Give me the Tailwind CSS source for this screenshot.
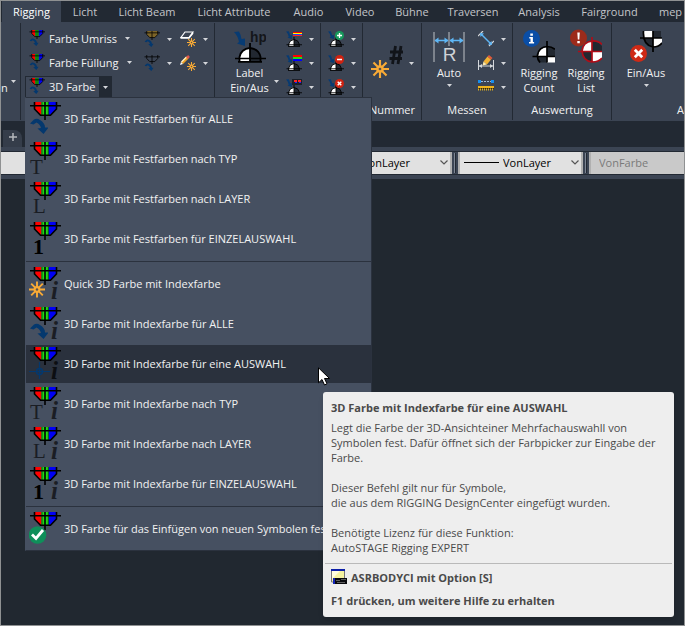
<!DOCTYPE html>
<html lang="de">
<head>
<meta charset="utf-8">
<title>Rigging</title>
<script src="https://cdn.jsdelivr.net/npm/@tailwindcss/browser@4"></script>
</head>
<body class="bg-[#212830] font-['Open_Sans','Noto_Sans',sans-serif] text-[11px] leading-[15px] text-[#f2f2f2]">
<svg class="absolute size-0" aria-hidden="true">
  <defs>
    <clipPath id="lampClip"><path d="M5.500 0h22v7l-6 6h-10l-6-6z"/></clipPath>
    <symbol id="caret" viewBox="0 0 5 3"><path d="M0 0h5L2.500 3z" fill="#d4d6da"/></symbol>
    <symbol id="lampOutline" viewBox="0 0 32 18"><path d="M5.500 0v7l6 6.200h10l6-6.200V0" fill="none" stroke="#000" stroke-width="1.600"/><path d="M1 3.700h31M16 0v18" stroke="#000" stroke-width="1.600"/></symbol>
    <symbol id="lamp" viewBox="0 0 32 18">
      <g clip-path="url(#lampClip)"><path d="M5 0h7.500v14H5z" fill="#f00"/><path d="M12.500 0h7v14h-7z" fill="#1fdc14"/><path d="M19.500 0H28v14h-8.500z" fill="#0000f5"/><path d="M13 0v14M19.300 0v14" stroke="#0b5a10" stroke-width="1"/></g>
      <use href="#lampOutline" width="32" height="18"/>
    </symbol>
    <symbol id="curve" viewBox="0 0 18 16"><path d="M0 5.500L4 1.500Q7 0 10 2Q15 5 15 9.500H18.500L13.500 16L7.500 10.500L11 10Q10 6 6.500 4.500L3.500 6.500z" fill="#04386e"/></symbol>
    <symbol id="sun" viewBox="0 0 16 16"><path d="M8 0v16M0 8h16M2.200 2.200l11.600 11.600M13.800 2.200L2.200 13.800" stroke="#f9ab36" stroke-width="1.900"/><circle cx="8" cy="8" r="3.400" fill="#f9ab36"/><circle cx="8" cy="8" r="1.200" fill="#59524c"/></symbol>
    <symbol id="lampCurve" viewBox="0 0 32 32"><use href="#lamp" width="32" height="18"/><use href="#curve" x="1" y="16" width="18" height="16"/></symbol>
    <symbol id="dart" viewBox="0 0 11 15"><path d="M0 1L5 .5Q7 4 7.500 8L11 7.500V15L3 12.500L5 11Q4 5 0 1z" fill="#073b73"/></symbol>
    <symbol id="dome" viewBox="0 0 32 20"><path d="M6 18V14Q7 6 16 5v13z" fill="#fff"/><path d="M16 5Q25 6 26 14v4H16z" fill="#222831"/><path d="M5.500 18V14Q7 6 16 5Q25 6 26.500 14V18M16 0v18" fill="none" stroke="#000" stroke-width="1.800"/><path d="M1 15.500h31M4 18.900h24" stroke="#000" stroke-width="1.700"/></symbol>
    <symbol id="chev" viewBox="0 0 8 5"><path d="M.5.500L4 4L7.500.500" fill="none" stroke="#555" stroke-width="1.200"/></symbol>
  </defs>
</svg>

<main class="relative min-h-screen overflow-hidden border border-[#8f9192]">
  <nav class="flex h-[21px] bg-[#222933] pl-px text-[#c3c5c9]" aria-label="Register">
    <button class="w-[59px] shrink-0 bg-[#3b4453] text-white">Rigging</button>
    <button class="w-12 shrink-0">Licht</button>
    <button class="w-[76px] shrink-0 whitespace-nowrap">Licht Beam</button>
    <button class="w-[98px] shrink-0 whitespace-nowrap">Licht Attribute</button>
    <button class="w-[51px] shrink-0">Audio</button>
    <button class="w-[52px] shrink-0">Video</button>
    <button class="w-[52px] shrink-0">Bühne</button>
    <button class="w-[70px] shrink-0">Traversen</button>
    <button class="w-[62px] shrink-0">Analysis</button>
    <button class="w-[79px] shrink-0">Fairground</button>
    <button class="shrink-0 pl-2.5">mep</button>
  </nav>

  <section class="flex h-[99px] overflow-hidden bg-[#3b4453] py-px" aria-label="Multifunktionsleiste">
    <div class="flex w-5 shrink-0 items-center border-r border-[#222933] pt-7">
      <button class="flex items-start gap-[3px]" aria-label="Weitere"><span class="pt-1">n</span><svg class="mt-1 h-[3px] w-[5px]"><use href="#caret"/></svg></button>
    </div>

    <div class="flex w-[194px] shrink-0 border-r border-[#222933] pt-1 pl-1">
      <div class="flex w-[119px] flex-col">
        <button class="flex h-6 items-center gap-1 pb-0.5 pl-1"><svg class="size-4"><use href="#lampCurve"/></svg>Farbe Umriss<svg class="ml-1 h-[3px] w-[5px]"><use href="#caret"/></svg></button>
        <button class="flex h-6 items-center gap-1 pb-0.5 pl-1"><svg class="size-4"><use href="#lampCurve"/></svg>Farbe Füllung<svg class="ml-1 h-[3px] w-[5px]"><use href="#caret"/></svg></button>
        <div class="mt-px flex h-[22px] w-[87px] border border-[#222933]">
          <button class="flex flex-1 items-center gap-1 bg-[#3f4858] pb-0.5 pl-[3px] whitespace-nowrap"><svg class="size-4"><use href="#lampCurve"/></svg>3D Farbe</button>
          <button class="flex w-3 items-center justify-center bg-[#222933]" aria-label="3D Farbe Optionen"><svg class="h-[3px] w-[5px]"><use href="#caret"/></svg></button>
        </div>
      </div>
      <div class="flex flex-col">
        <button class="flex h-6 items-center gap-[7px]" aria-label="Farbe ändern"><svg class="size-4" viewBox="0 0 32 32"><path d="M5.500 0h22v7l-6 6h-10l-6-6z" fill="#7d6529"/><use href="#lampOutline" width="32" height="18"/><use href="#curve" x="1" y="16" width="18" height="16"/></svg><svg class="h-[3px] w-[5px]"><use href="#caret"/></svg></button>
        <button class="flex h-6 items-center gap-[7px]" aria-label="Füllung ändern"><svg class="size-4" viewBox="0 0 32 32"><use href="#lampOutline" width="32" height="18"/><use href="#curve" x="1" y="16" width="18" height="16"/></svg><svg class="h-[3px] w-[5px]"><use href="#caret"/></svg></button>
      </div>
      <div class="ml-2 flex flex-col">
        <button class="flex h-6 items-center gap-[7px]" aria-label="Radieren"><svg class="size-4" viewBox="0 0 16 16"><path d="M5 1h8L9 6.500H1z" fill="#3b4453" stroke="#fff" stroke-width="1.200"/><path d="M.5 7h8.500L13 2" fill="none" stroke="#fff" stroke-width="1.500"/><use href="#sun" x="7" y="7" width="9" height="9"/></svg><svg class="h-[3px] w-[5px]"><use href="#caret"/></svg></button>
        <button class="flex h-6 items-center gap-[7px]" aria-label="Stift"><svg class="size-4" viewBox="0 0 16 16"><path d="M2 8L7.500 2.500" stroke="#f0a428" stroke-width="3"/><path d="M1.500 7L6.500 2" stroke="#fff3c8" stroke-width="1.200"/><path d="M7 3L9 1" stroke="#e2574c" stroke-width="2.500"/><path d="M0 10L1 7l2 2z" fill="#fff"/><use href="#sun" x="7" y="7" width="9" height="9"/></svg><svg class="h-[3px] w-[5px]"><use href="#caret"/></svg></button>
      </div>
    </div>

    <div class="flex w-[106px] shrink-0 border-r border-[#222933] pt-1 pl-2.5">
      <button class="flex w-[49px] flex-col items-center pt-1">
        <svg class="size-8" viewBox="0 0 32 32"><use href="#dart" x="0" y="0" width="11" height="15"/><text x="16" y="11" font-family="Liberation Mono" font-weight="bold" font-size="14" fill="#14161a">hp</text><use href="#dome" x="0" y="12" width="32" height="20"/></svg>
        <span class="mt-0.5 block">Label<br>Ein/Aus</span>
      </button>
      <svg class="mt-[53px] h-[3px] w-[5px]"><use href="#caret"/></svg>
      <div class="ml-[7px] flex flex-col">
        <button class="flex h-6 items-center gap-[7px]" aria-label="Label Farbe 1"><svg class="size-4" viewBox="0 0 16 16"><use href="#dart" width="6" height="8"/><path d="M7 1h9v1H7z" fill="#f00"/><path d="M7 2h9v1H7z" fill="#ff0"/><path d="M7 3h9v1H7z" fill="#14f"/><path d="M7 4h9v1H7z" fill="#f22"/><use href="#dome" y="6" width="16" height="10"/></svg><svg class="h-[3px] w-[5px]"><use href="#caret"/></svg></button>
        <button class="flex h-6 items-center gap-[7px]" aria-label="Label Farbe 2"><svg class="size-4" viewBox="0 0 16 16"><use href="#dart" width="6" height="8"/><path d="M7 0h9v2H7z" fill="#f00"/><path d="M7 2h9v2H7z" fill="#1fe014"/><path d="M7 4h9v2H7z" fill="#00f"/><use href="#dome" y="6" width="16" height="10"/></svg><svg class="h-[3px] w-[5px]"><use href="#caret"/></svg></button>
        <button class="flex h-6 items-center gap-[7px]" aria-label="Label Farbe 3"><svg class="size-4" viewBox="0 0 16 16"><use href="#dart" width="6" height="8"/><path d="M6 0h10v6H6z" fill="#1c2029"/><path d="M8 1h3v2H8zM12 1h3v2h-3z" fill="#f22"/><path d="M9 3h2v1H9zM13 3h2v1h-2z" fill="#22f"/><use href="#dome" y="6" width="16" height="10"/></svg><svg class="h-[3px] w-[5px]"><use href="#caret"/></svg></button>
      </div>
    </div>

    <div class="flex w-[42px] shrink-0 flex-col border-r border-[#222933] pt-1 pl-[7px]">
      <button class="flex h-6 items-center gap-[7px]" aria-label="Hinzufügen"><svg class="size-4" viewBox="0 0 16 16"><use href="#dart" width="6" height="8"/><use href="#dome" y="6" width="16" height="10"/><circle cx="11.500" cy="4.500" r="4.500" fill="#169a5c"/><path d="M11.500 2v5M9 4.500h5" stroke="#fff" stroke-width="1.300"/></svg><svg class="h-[3px] w-[5px]"><use href="#caret"/></svg></button>
      <button class="flex h-6 items-center gap-[7px]" aria-label="Entfernen"><svg class="size-4" viewBox="0 0 16 16"><use href="#dart" width="6" height="8"/><use href="#dome" y="6" width="16" height="10"/><circle cx="11.500" cy="4.500" r="4.500" fill="#cf2211"/><path d="M9 4.500h5" stroke="#fff" stroke-width="1.500"/></svg><svg class="h-[3px] w-[5px]"><use href="#caret"/></svg></button>
      <button class="flex h-6 items-center gap-[7px]" aria-label="Löschen"><svg class="size-4" viewBox="0 0 16 16"><use href="#dart" width="6" height="8"/><use href="#dome" y="6" width="16" height="10"/><circle cx="11.500" cy="4.500" r="4.500" fill="#cf2211"/><path d="M9.700 2.700l3.600 3.600M13.300 2.700L9.700 6.300" stroke="#fff" stroke-width="1.400"/></svg><svg class="h-[3px] w-[5px]"><use href="#caret"/></svg></button>
    </div>

    <div class="flex w-[59px] shrink-0 flex-col items-center border-r border-[#222933] pt-1">
      <button class="flex h-[72px] items-center gap-1.5" aria-label="Neue Nummer"><svg class="h-9 w-8" viewBox="0 0 32 36"><use href="#sun" x="0" y="15" width="18" height="18"/><path d="M24.500 1L21.500 19M30 1L27 19M19 7h13M18.500 13.500H31" stroke="#111419" stroke-width="2.800"/></svg><svg class="h-[3px] w-[5px]"><use href="#caret"/></svg></button>
      <div class="flex h-5 items-center">Nummer</div>
    </div>

    <div class="flex w-[91px] shrink-0 flex-col items-center border-r border-[#222933] pt-1">
      <div class="flex h-[72px] gap-[11px] self-start pl-[9px]">
        <button class="flex w-9 flex-col items-center pt-1">
          <svg class="size-8" viewBox="0 0 32 32"><path d="M1 1v30M16 1v14M31 1v30" stroke="#bfc2c7" stroke-width="1"/><path d="M2 9.500h13M17 9.500h13" stroke="#5eb6f5" stroke-width="1.300"/><path d="M1.500 9.500l4-3v6zM15.500 9.500l-4-3v6zM16.500 9.500l4-3v6zM30.500 9.500l-4-3v6z" fill="#5eb6f5"/><text x="16.500" y="30" text-anchor="middle" font-family="Liberation Sans" font-size="19" fill="#cfd2d6">R</text></svg>
          <span class="mt-0.5">Auto</span><svg class="mt-1 h-[3px] w-[5px]"><use href="#caret"/></svg>
        </button>
        <div class="flex flex-col">
          <button class="flex h-6 items-center gap-[7px]" aria-label="Abstand messen"><svg class="size-4" viewBox="0 0 16 16"><path d="M0 5L5 0M11 15l5-5" stroke="#d5d8dc" stroke-width="1.200"/><path d="M3 3l10 10" stroke="#5eb6f5" stroke-width="1.400"/><path d="M2 2l4 .5L2.500 6zM14 14l-4-.5 3.500-3.500z" fill="#5eb6f5"/></svg><svg class="h-[3px] w-[5px]"><use href="#caret"/></svg></button>
          <button class="flex h-6 items-center gap-[7px]" aria-label="Maß bearbeiten"><svg class="size-4" viewBox="0 0 16 16"><path d="M.5 5v10M15.500 5v10M1 11h14" stroke="#d5d8dc"/><path d="M1 11l3-2v4zM15 11l-3-2v4z" fill="#d5d8dc"/><path d="M5.500 6.500L9.500 1.500L13 4.500L9 9.500z" fill="#f3b233"/><path d="M9.500 1.500L11 0L14.500 3L13 4.500z" fill="#e25a3c"/><path d="M4.500 10.500l1-4L9 9.500z" fill="#ffe9a8"/></svg><svg class="h-[3px] w-[5px]"><use href="#caret"/></svg></button>
          <button class="flex h-6 items-center gap-[7px]" aria-label="Lineal"><svg class="size-4" viewBox="0 0 16 16"><path d="M3 2.500h10" stroke="#9bb8d8" stroke-dasharray="2 1"/><path d="M0 1h3v3H0zM13 1h3v3h-3z" fill="#168ef0"/><path d="M0 7h16v3H0z" fill="#f0b51c"/><path d="M0 9.500h16" stroke="#3a2c08" stroke-width="1"/><path d="M0 10.500h16" stroke="#e2b021" stroke-width="2" stroke-dasharray="1 1"/></svg><svg class="h-[3px] w-[5px]"><use href="#caret"/></svg></button>
        </div>
      </div>
      <div class="flex h-5 items-center">Messen</div>
    </div>

    <div class="flex w-[99px] shrink-0 flex-col items-center border-r border-[#222933] pt-1">
      <div class="flex h-[72px] text-center">
        <button class="flex w-12 flex-col items-center pt-0.5">
          <svg class="h-[34px] w-8" viewBox="0 0 32 34"><circle cx="8.500" cy="9.500" r="8.500" fill="#0a4ea6"/><path d="M7.300 4.500h2.600v2.300H7.300zM6.300 8h3.600v5h1.200v1.500H6V13h1.500V9.500H6.300z" fill="#fff"/><path d="M15 27Q15.500 18.500 24 18V27z" fill="#fff"/><path d="M24 18q5 0 8 3.500V27h-8z" fill="#222831"/><path d="M15 28h9v5.500h-7z" fill="#222831"/><path d="M24 28h8v5.500h-8z" fill="#fff"/><path d="M17 33.500Q14 30 14.500 26Q16 18 24 17.500Q29 17.500 32 20.500M24 12v21.500M9.500 27.500H32" fill="none" stroke="#000" stroke-width="1.700"/></svg>
          <span class="mt-0.5">Rigging<br>Count</span>
        </button>
        <button class="flex w-[46px] flex-col items-center pt-0.5">
          <svg class="h-[34px] w-8" viewBox="0 0 32 34"><path d="M12 22Q13 13 22 12V22z" fill="#fff"/><path d="M22 12q6 0 10 5v5H22z" fill="#222831"/><path d="M12 22h10v11q-9-1-10-11z" fill="#222831"/><path d="M22 22h10v7q-4 4-10 4z" fill="#fff"/><path d="M32 15.500Q28 11.500 22 12Q13 13 12 22Q13 32 22 33Q29 33 32 29M22 8v25.500M8 22.500h24" fill="none" stroke="#b00d18" stroke-width="1.700"/><circle cx="8.500" cy="9" r="8.500" fill="#9c2b1b"/><path d="M7.300 3.500h2.500l-.5 7H7.800zM7.300 12h2.500v2.200H7.300z" fill="#fff"/></svg>
          <span class="mt-0.5">Rigging<br>List</span>
        </button>
      </div>
      <div class="flex h-5 items-center">Auswertung</div>
    </div>

    <div class="flex w-[72px] flex-col overflow-hidden pt-1">
      <button class="flex h-[72px] flex-col items-center pt-1 pr-1">
        <svg class="h-8 w-8" viewBox="0 0 32 32"><path d="M14 0h9v7h-9z" fill="#fff"/><path d="M23 0h8v7h-8z" fill="#222831"/><path d="M14 7h9v9q-8-1-9-9z" fill="#222831"/><path d="M23 7h9v4q-3 5-9 5z" fill="#fff"/><path d="M13.500 0q-1 14 9.500 16q6 0 9-4M23 0v21M10 7h22" fill="none" stroke="#000" stroke-width="1.700"/><circle cx="8.500" cy="22.500" r="8.500" fill="#cf2a16"/><path d="M4.800 18.800l7.400 7.400M12.200 18.800l-7.400 7.400" stroke="#fff" stroke-width="2.800"/></svg>
        <span class="mt-0.5">Ein/Aus</span><svg class="mt-1 h-[3px] w-[5px]"><use href="#caret"/></svg>
      </button>
      <div class="flex h-5 items-center justify-end">A</div>
    </div>
  </section>

  <div class="flex h-[26px] items-end bg-[#222933] pl-0.5">
    <button class="flex h-[17px] w-[19px] items-center justify-center rounded-tr-lg bg-[#353d4a] pb-1" aria-label="Neue Zeichnung"><svg class="size-2" viewBox="0 0 8 8"><path d="M4 0v8M0 4h8" stroke="#b5b8bd" stroke-width="1.500"/></svg></button>
  </div>

  <div class="flex h-8 items-center bg-[#3b4453]">
    <div class="flex h-6 w-full items-center border-y border-[#222933] text-black">
      <select class="h-full w-40 shrink-0 appearance-none bg-[#e1e1e1] px-2" aria-label="Layer"><option></option></select>
      <div class="relative ml-2 h-full flex-1">
        <select class="h-full w-full appearance-none border-r-2 border-[#b0b0b0] bg-[#e1e1e1] pb-0.5 pl-[193px]" aria-label="Farbe"><option>VonLayer</option></select>
        <svg class="pointer-events-none absolute top-2 right-1 h-[5px] w-2"><use href="#chev"/></svg>
      </div>
      <div class="mx-0.5 h-5 w-0.5 shrink-0 border-r border-l border-r-[#222933] border-l-[#7d8593]"></div>
      <div class="relative h-full w-[125px] shrink-0">
        <select class="h-full w-full appearance-none border-x-2 border-[#b0b0b0] bg-[#e1e1e1] pb-0.5 pl-[43px]" aria-label="Linientyp"><option>VonLayer</option></select>
        <svg class="pointer-events-none absolute top-2.5 left-1.5 h-px w-[35px]"><path d="M0 .5h35" stroke="#000"/></svg>
        <svg class="pointer-events-none absolute top-2 right-1 h-[5px] w-2"><use href="#chev"/></svg>
      </div>
      <div class="mx-0.5 h-5 w-0.5 shrink-0 border-r border-l border-r-[#222933] border-l-[#7d8593]"></div>
      <select class="h-full w-[95px] shrink-0 appearance-none border-l-2 border-[#b0b0b0] bg-[#c9c9c9] pb-0.5 pl-2 text-[#7a7a7a] opacity-100" disabled aria-label="Plotstil"><option>VonFarbe</option></select>
    </div>
  </div>

  <div role="menu" class="absolute top-24 left-6 flex w-[347px] flex-col gap-0.5 border border-[#2b323e] border-l-[#465061] bg-[#465061] py-0.5">
    <button role="menuitem" class="flex h-[38px] items-center gap-[3px] pb-0.5 pl-[3px] text-left whitespace-nowrap"><svg class="size-8 shrink-0"><use href="#lampCurve"/></svg>3D Farbe mit Festfarben für ALLE</button>
    <button role="menuitem" class="flex h-[38px] items-center gap-[3px] pb-0.5 pl-[3px] text-left whitespace-nowrap"><svg class="size-8 shrink-0" viewBox="0 0 32 32"><use href="#lamp" width="32" height="18"/><text x="1" y="31.500" font-family="Liberation Serif" font-size="21" fill="#1a1d24">T</text></svg>3D Farbe mit Festfarben nach TYP</button>
    <button role="menuitem" class="flex h-[38px] items-center gap-[3px] pb-0.5 pl-[3px] text-left whitespace-nowrap"><svg class="size-8 shrink-0" viewBox="0 0 32 32"><use href="#lamp" width="32" height="18"/><text x="4" y="30.500" font-family="Liberation Serif" font-size="21" fill="#1a1d24">L</text></svg>3D Farbe mit Festfarben nach LAYER</button>
    <button role="menuitem" class="flex h-[38px] items-center gap-[3px] pb-0.5 pl-[3px] text-left whitespace-nowrap"><svg class="size-8 shrink-0" viewBox="0 0 32 32"><use href="#lamp" width="32" height="18"/><text x="4" y="32" font-family="Liberation Serif" font-weight="bold" font-size="22" fill="#000">1</text></svg>3D Farbe mit Festfarben für EINZELAUSWAHL</button>
    <div role="separator" class="my-px h-px bg-[#2b323e]"></div>
    <button role="menuitem" class="flex h-[38px] items-center gap-[3px] pb-0.5 pl-[3px] text-left whitespace-nowrap"><svg class="size-8 shrink-0" viewBox="0 0 32 32"><use href="#lamp" width="32" height="18"/><use href="#sun" x="0" y="14" width="16" height="17"/><text x="22" y="31.500" font-family="Liberation Serif" font-style="italic" font-weight="bold" font-size="25" fill="#1a1d24">i</text></svg>Quick 3D Farbe mit Indexfarbe</button>
    <button role="menuitem" class="flex h-[38px] items-center gap-[3px] pb-0.5 pl-[3px] text-left whitespace-nowrap"><svg class="size-8 shrink-0" viewBox="0 0 32 32"><use href="#lampCurve"/><text x="22" y="31.500" font-family="Liberation Serif" font-style="italic" font-weight="bold" font-size="25" fill="#1a1d24">i</text></svg>3D Farbe mit Indexfarbe für ALLE</button>
    <button role="menuitem" class="flex h-[38px] items-center gap-[3px] bg-[#2a313d] pb-0.5 pl-[3px] text-left whitespace-nowrap"><svg class="size-8 shrink-0" viewBox="0 0 32 32"><use href="#lamp" width="32" height="18"/><path d="M10.500 15v17M0 24.500h21" stroke="#04386e" stroke-width="1.200"/><circle cx="10.500" cy="24.500" r="3" fill="none" stroke="#04386e" stroke-width="1.500"/><text x="22" y="31.500" font-family="Liberation Serif" font-style="italic" font-weight="bold" font-size="25" fill="#0c0e12">i</text></svg>3D Farbe mit Indexfarbe für eine AUSWAHL</button>
    <button role="menuitem" class="flex h-[38px] items-center gap-[3px] pb-0.5 pl-[3px] text-left whitespace-nowrap"><svg class="size-8 shrink-0" viewBox="0 0 32 32"><use href="#lamp" width="32" height="18"/><text x="1" y="31.500" font-family="Liberation Serif" font-size="21" fill="#1a1d24">T</text><text x="22" y="31.500" font-family="Liberation Serif" font-style="italic" font-weight="bold" font-size="25" fill="#1a1d24">i</text></svg>3D Farbe mit Indexfarbe nach TYP</button>
    <button role="menuitem" class="flex h-[38px] items-center gap-[3px] pb-0.5 pl-[3px] text-left whitespace-nowrap"><svg class="size-8 shrink-0" viewBox="0 0 32 32"><use href="#lamp" width="32" height="18"/><text x="4" y="30.500" font-family="Liberation Serif" font-size="21" fill="#1a1d24">L</text><text x="22" y="31.500" font-family="Liberation Serif" font-style="italic" font-weight="bold" font-size="25" fill="#1a1d24">i</text></svg>3D Farbe mit Indexfarbe nach LAYER</button>
    <button role="menuitem" class="flex h-[38px] items-center gap-[3px] pb-0.5 pl-[3px] text-left whitespace-nowrap"><svg class="size-8 shrink-0" viewBox="0 0 32 32"><use href="#lamp" width="32" height="18"/><text x="4" y="32" font-family="Liberation Serif" font-weight="bold" font-size="22" fill="#000">1</text><text x="22" y="31.500" font-family="Liberation Serif" font-style="italic" font-weight="bold" font-size="25" fill="#1a1d24">i</text></svg>3D Farbe mit Indexfarbe für EINZELAUSWAHL</button>
    <div role="separator" class="my-px h-px bg-[#2b323e]"></div>
    <button role="menuitem" class="flex h-[38px] items-center gap-[3px] pb-0.5 pl-[3px] text-left whitespace-nowrap"><svg class="size-8 shrink-0" viewBox="0 0 32 32"><use href="#lamp" width="32" height="18"/><circle cx="8.500" cy="23" r="8.800" fill="#0f8f5a"/><path d="M3 22.500l4 4 7-8.500" fill="none" stroke="#fff" stroke-width="2.800"/></svg>3D Farbe für das Einfügen von neuen Symbolen festlegen</button>
  </div>

  <div role="tooltip" class="absolute top-[391px] left-[322px] w-[351px] rounded-[3px] bg-[#eeeeee] px-2 pt-2 pb-[9px] text-[#4a4a4a] shadow-md">
    <h2 class="font-bold">3D Farbe mit Indexfarbe für eine AUSWAHL</h2>
    <div class="mt-[5px] whitespace-nowrap">
      <p>Legt die Farbe der 3D-Ansichteiner Mehrfachauswahll von<br>Symbolen fest. Dafür öffnet sich der Farbpicker zur Eingabe der<br>Farbe.</p>
      <p class="mt-[15px]">Dieser Befehl gilt nur für Symbole,<br>die aus dem RIGGING DesignCenter eingefügt wurden.</p>
      <p class="mt-[15px]">Benötigte Lizenz für diese Funktion:<br>AutoSTAGE Rigging EXPERT</p>
    </div>
    <hr class="-mx-1.5 mt-2 border-[#b9b9b9]">
    <p class="mt-[5px] flex h-4 items-center gap-1 font-bold"><svg class="size-4" viewBox="0 0 16 16"><path d="M.5 1h13v12H.5z" fill="#f5f3a2" stroke="#777" stroke-width="1"/><path d="M1 2h8l-8 8z" fill="#fffee0"/><path d="M0 0h14v2H0z" fill="#0b1ea8"/><path d="M2 9h14v6H2z" fill="#08090d"/><path d="M2 9h2v6H2z" fill="#1425b8"/><path d="M5 11.500h4M10 10.500h5M6 13.500h8" stroke="#777" stroke-width=".8"/></svg>ASRBODYCI mit Option [S]</p>
    <p class="mt-2 font-bold">F1 drücken, um weitere Hilfe zu erhalten</p>
  </div>

  <svg class="pointer-events-none absolute top-[366px] left-[317px] h-[19px] w-3" viewBox="0 0 12 19"><path d="M.5.800v15l3.500-3.300 2.500 5.500 2.500-1.200-2.500-5.300h5z" fill="#fff" stroke="#000" stroke-width="1"/></svg>
</main>
</body>
</html>
